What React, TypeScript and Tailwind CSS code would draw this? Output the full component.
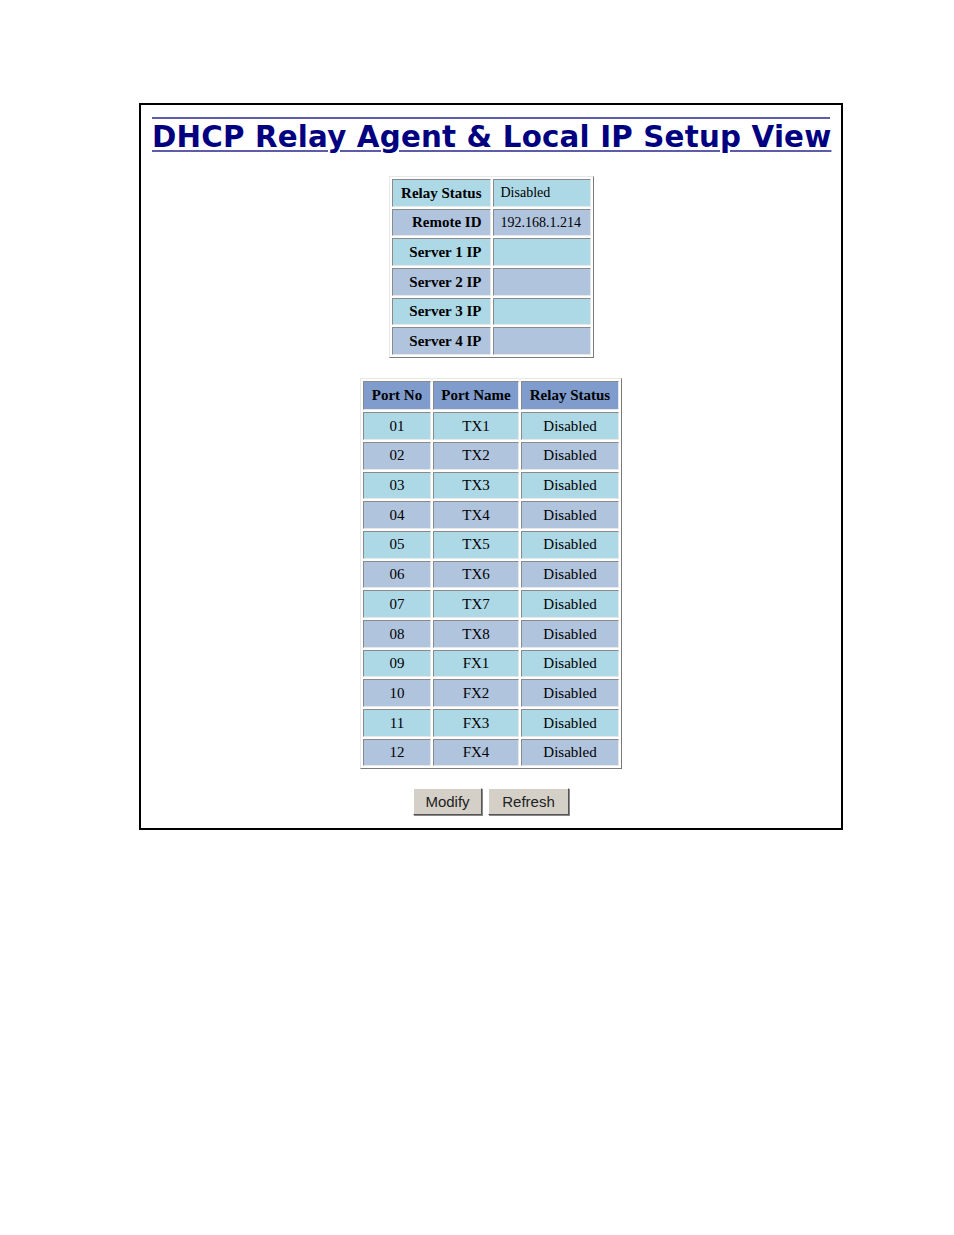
const relayRows = [
  ['Relay Status', 'Disabled'],
  ['Remote ID', '192.168.1.214'],
  ['Server 1 IP', ''],
  ['Server 2 IP', ''],
  ['Server 3 IP', ''],
  ['Server 4 IP', ''],
]

const ports = [
  ['01', 'TX1'],
  ['02', 'TX2'],
  ['03', 'TX3'],
  ['04', 'TX4'],
  ['05', 'TX5'],
  ['06', 'TX6'],
  ['07', 'TX7'],
  ['08', 'TX8'],
  ['09', 'FX1'],
  ['10', 'FX2'],
  ['11', 'FX3'],
  ['12', 'FX4'],
]

const cell =
  'h-[27.7px] border border-t-[#8a8a8a] border-l-[#8a8a8a] border-r-[#e8e8e8] border-b-[#e8e8e8] p-0'

export default function App() {
  return (
    <div className="min-h-[1235px] bg-white pt-[103px] pl-[139px] font-['Liberation_Serif',serif]">
      <div className="h-[727px] w-[704px] border-2 border-black px-[11px] pt-[12px]">
        <div className="border-t-2 border-[#5c5ca8]" />
        <h1 className="mt-[1px] text-center font-['DejaVu_Sans',Verdana,sans-serif] text-[29.3px] leading-[34px] font-bold tracking-[0.2px] whitespace-nowrap text-[#000080] underline decoration-[#5c5ca8] decoration-2 underline-offset-[3px]">
          DHCP Relay Agent &amp; Local IP Setup View
        </h1>

        <table className="mx-auto mt-[22px] border-separate border-spacing-[2px] border border-t-[#e8e8e8] border-l-[#e8e8e8] border-r-[#7a7a7a] border-b-[#7a7a7a] text-[15px] text-black">
          <tbody>
            {relayRows.map(([label, value], i) => (
              <tr key={label} className={i % 2 === 0 ? 'bg-[#add8e6]' : 'bg-[#b0c4de]'}>
                <td className={`${cell} w-[99px] pr-[8px] text-right font-bold whitespace-nowrap`}>{label}</td>
                <td className={`${cell} w-[98px] pl-[7px] text-left text-[14px]`}>{value}</td>
              </tr>
            ))}
          </tbody>
        </table>

        <table className="mx-auto mt-[20px] border-separate border-spacing-[2px] border border-t-[#e8e8e8] border-l-[#e8e8e8] border-r-[#7a7a7a] border-b-[#7a7a7a] text-center text-[15px] text-black">
          <thead>
            <tr className="bg-[#7f9ccd]">
              <th className={`${cell} h-[29px] w-[68px] font-bold whitespace-nowrap`}>Port No</th>
              <th className={`${cell} h-[29px] w-[86px] font-bold whitespace-nowrap`}>Port Name</th>
              <th className={`${cell} h-[29px] w-[98px] font-bold whitespace-nowrap`}>Relay Status</th>
            </tr>
          </thead>
          <tbody>
            {ports.map(([no, name], i) => (
              <tr key={no} className={i % 2 === 0 ? 'bg-[#add8e6]' : 'bg-[#b0c4de]'}>
                <td className={cell}>{no}</td>
                <td className={cell}>{name}</td>
                <td className={cell}>Disabled</td>
              </tr>
            ))}
          </tbody>
        </table>

        <div className="mt-[19px] flex justify-center gap-[6px] font-['Liberation_Sans',Arial,sans-serif] text-[15px] text-[#222]">
          <button
            type="button"
            className="h-[27px] w-[69px] border border-t-white border-l-white border-r-[#555] border-b-[#555] bg-[#d4d0c8] shadow-[1px_1px_0_#888]"
          >
            Modify
          </button>
          <button
            type="button"
            className="h-[27px] w-[81px] border border-t-white border-l-white border-r-[#555] border-b-[#555] bg-[#d4d0c8] shadow-[1px_1px_0_#888]"
          >
            Refresh
          </button>
        </div>
      </div>
    </div>
  )
}
